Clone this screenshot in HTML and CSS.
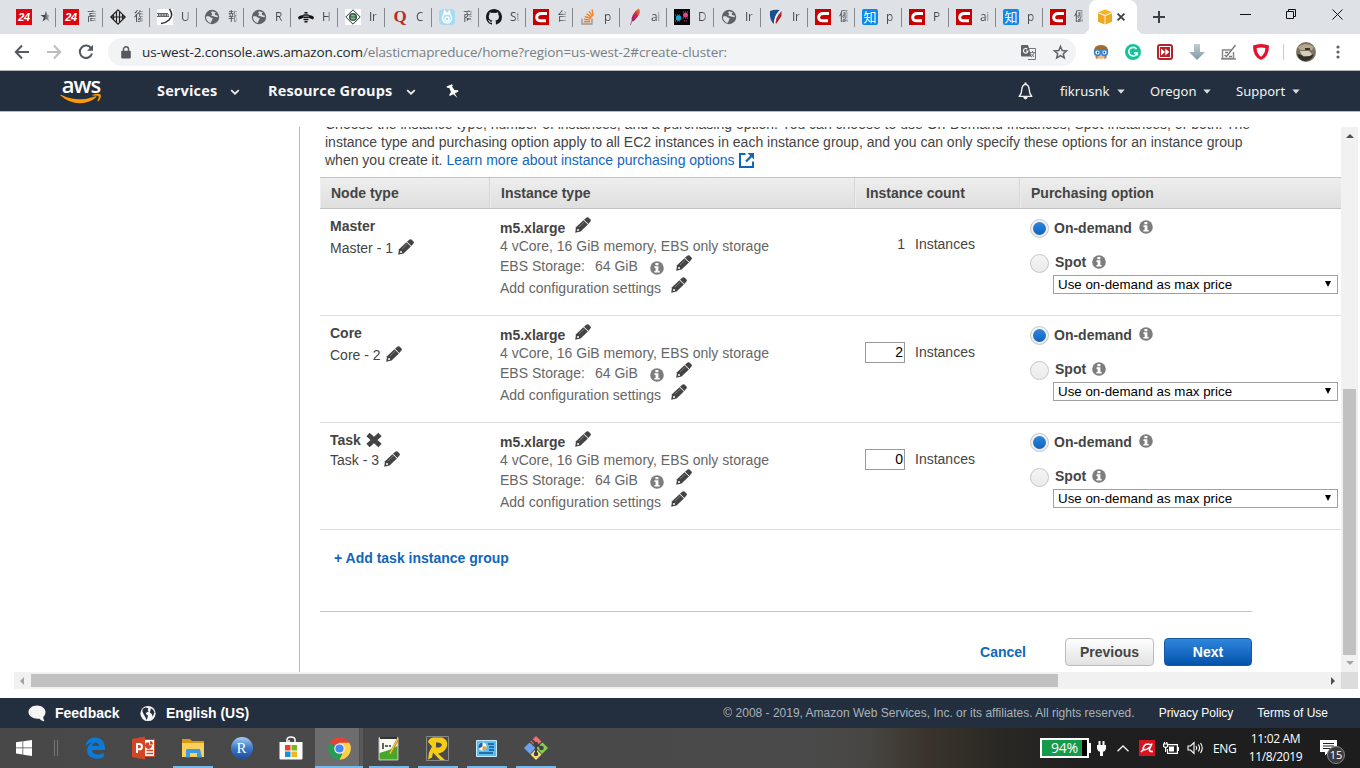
FILE: index.html
```html
<!DOCTYPE html>
<html lang="en">
<head>
<meta charset="utf-8">
<title>EMR - Create Cluster</title>
<link rel="stylesheet" href="styles.css">
</head>
<body>
<svg class="defs" width="0" height="0">
  <defs>
    <linearGradient id="gdown" x1="0" y1="0" x2="0" y2="1"><stop offset="0" stop-color="#c3cdd2"/><stop offset="1" stop-color="#7d99a6"/></linearGradient>
    <linearGradient id="gfeather" x1="1" y1="0" x2="0" y2="1"><stop offset="0" stop-color="#f79a23"/><stop offset=".4" stop-color="#cd2250"/><stop offset="1" stop-color="#6b2a7e"/></linearGradient>
  </defs>
  <symbol id="pencil" viewBox="0 0 16 16"><path fill="#444" d="M.2 15.700 1 10.300 8.400 3.300 12.900 7.600 5.600 14.600z"/><path fill="#444" d="M9 2.700 11.600.4Q12.500-.2 13.500.6L15.500 2.500Q16.300 3.400 15.600 4.300L13.400 7z"/><path stroke="#8a8a8a" stroke-width=".8" d="M4 10 9.300 5"/><circle cx="3" cy="13" r="1" fill="#fff"/></symbol>
  <symbol id="info" viewBox="0 0 14 14"><circle cx="7" cy="7" r="6.800" fill="#7d7d7d"/><path fill="#fff" d="M5.400 2h3v2.300h-3zM4.500 5.300h3.900v4.600h1.300v1.700H4.400V9.900h1.200V7H4.500z"/></symbol>
  <symbol id="globe" viewBox="0 0 16 16"><circle cx="8" cy="8" r="7.200" fill="#5f6368"/><path fill="#dee1e6" d="M2 7.500c2-.5 4-.3 4.500 1l2 .5c.5 1.500-1 2-1 3.500L6.500 14C3.500 13 1.800 10.500 2 7.500zM8 2.200l4 1.400-1.500 1.200.8 1.200 2.500.8v1.500l-3-.5L8.500 7 7 6.200 8.500 5 7 3.500z"/></symbol>
  <symbol id="csdn" viewBox="0 0 16 16"><path fill="#c90000" d="M0 0h16v16H0z"/><path fill="none" stroke="#fff" stroke-width="3" d="M14 4.500H9Q4.200 4.300 3.700 8 3.400 11.700 8 11.700h5"/></symbol>
  <symbol id="caret" viewBox="0 0 8 5"><path fill="#ddd" d="M.3.500h7.400L4 4.800z"/></symbol>
  <symbol id="chev" viewBox="0 0 10 7"><path fill="none" stroke="#eee" stroke-width="1.800" d="m1.200 1.200 3.800 3.500 3.800-3.500"/></symbol>
</svg>

<div class="tabstrip">
  <div class="tab"><span class="fav red24">24</span><span class="tt">★</span></div>
  <div class="tab"><span class="fav red24">24</span><span class="tt">高</span></div>
  <div class="tab"><svg class="fav" viewBox="0 0 16 16"><path fill="none" stroke="#222" stroke-width="1.200" d="M8 .8 15.200 8 8 15.200.8 8zM6.500 3v10M9.500 3v10M3.500 6v4M12.500 6v4M1 8h14"/></svg><span class="tt">復</span></div>
  <div class="tab"><svg class="fav" viewBox="0 0 16 16"><path fill="#fff" d="M0 0h16v16H0z"/><path fill="none" stroke="#666" d="M0 4.500h11M0 7.500h12"/><path stroke="#555" stroke-width="2" d="M1 6h11" stroke-dasharray="1 .6"/><path fill="none" stroke="#333" stroke-width="1.500" d="M12.500 0q4.500 6-.5 11-3 3-8 3.500"/></svg><span class="tt">U</span></div>
  <div class="tab"><svg class="fav"><use href="#globe"/></svg><span class="tt">報</span></div>
  <div class="tab"><svg class="fav"><use href="#globe"/></svg><span class="tt">R</span></div>
  <div class="tab"><svg class="fav" viewBox="0 0 16 16"><path fill="#111" d="M0 8.500Q1 6 6 6l-1 3-4 1.500zM16 8.500Q15 6 10 6l1 3 4 1.500z"/><path stroke="#111" stroke-width="1.500" d="M6.500 3.700h3M5.500 6h5M5.300 8.300h5.400M5.500 10.600h5M6.500 12.700h3"/></svg><span class="tt">H</span></div>
  <div class="tab"><svg class="fav" viewBox="0 0 16 16"><path fill="#fff" d="M0 0h16v16H0z"/><path fill="none" stroke="#333" d="M8 .8 15.200 8 8 15.200.8 8z"/><circle cx="8" cy="8" r="3.300" fill="#8fb69b" stroke="#295f3d" stroke-width="1.500"/><path stroke="#295f3d" d="M5 8h6"/></svg><span class="tt">Ir</span></div>
  <div class="tab"><span class="fav quora">Q</span><span class="tt">C</span></div>
  <div class="tab"><svg class="fav" viewBox="0 0 16 16"><rect width="16" height="16" rx="4" fill="#a5dcf3"/><g fill="none" stroke="#fff" stroke-width="1.500"><circle cx="8" cy="9.300" r="4.500"/><circle cx="8" cy="10" r="2"/><path d="M5 6 5.500 2 8 5l2.500-3L11 6"/></g></svg><span class="tt">商</span></div>
  <div class="tab"><svg class="fav" viewBox="0 0 16 16"><path fill="#15191d" d="M8 0C3.580 0 0 3.580 0 8c0 3.540 2.290 6.530 5.470 7.590.4.070.55-.17.55-.38v-1.490c-2.010.37-2.690-.49-2.850-1.080-.09-.23-.48-.94-.82-1.130-.28-.15-.68-.52-.01-.53.63-.01 1.080.58 1.230.82.72 1.210 1.870.87 2.330.66.070-.52.28-.87.510-1.070-1.780-.2-3.640-.89-3.640-3.950 0-.87.310-1.590.82-2.150-.08-.2-.36-1.020.08-2.120 0 0 .67-.21 2.200.82a7.600 7.600 0 0 1 4 0c1.530-1.040 2.200-.82 2.200-.82.44 1.100.16 1.920.08 2.120.51.56.82 1.270.82 2.150 0 3.070-1.870 3.750-3.650 3.950.29.25.54.73.54 1.480v2.200c0 .21.15.46.55.38A8 8 0 0 0 16 8c0-4.420-3.580-8-8-8"/></svg><span class="tt">St</span></div>
  <div class="tab"><svg class="fav"><use href="#csdn"/></svg><span class="tt">台</span></div>
  <div class="tab"><svg class="fav" viewBox="0 0 16 16"><path fill="none" stroke="#999" stroke-width="1.400" d="M2 9.500V15h10V9.500"/><path fill="none" stroke="#f48024" stroke-width="1.400" d="M3.800 12.800h6.400M4 10.300l6.300.8M4.800 7.500l6 2M6.500 4.700l5.200 3.700M9 2.300l3.700 5M12 .5l1.200 6"/></svg><span class="tt">p</span></div>
  <div class="tab"><svg class="fav" viewBox="0 0 16 16"><path fill="url(#gfeather)" d="M12 0q2 1 .5 4.500T7 12l-2 .5L3.800 16l-.6-.3 1.500-4Q4 8 7.500 3.500T12 0z"/></svg><span class="tt">ai</span></div>
  <div class="tab"><svg class="fav" viewBox="0 0 16 16"><path fill="#050505" d="M0 0h16v16H0z"/><circle cx="4.500" cy="9" r="2.700" fill="#14a5d8"/><circle cx="11.500" cy="6" r="2.500" fill="#e83e8c"/><path stroke="#14a5d8" stroke-dasharray="1 1" d="M1 6h5M1 12h6"/><path stroke="#e83e8c" stroke-dasharray="1 1" d="M9 3h6M9 9h6M10 12h4"/></svg><span class="tt">D</span></div>
  <div class="tab"><svg class="fav"><use href="#globe"/></svg><span class="tt">Ir</span></div>
  <div class="tab"><svg class="fav" viewBox="0 0 16 16"><path fill="#15508f" d="M2 2q5-2 10-1Q6 6 6 15 1 11 2 2z"/><path fill="#b3202c" d="M13.500 2v5L8 15q-1-2 .5-5.500T13.500 2z"/><path stroke="#fff" stroke-width="1" fill="none" d="M12.500 1Q7 6 6.500 14"/></svg><span class="tt">Ir</span></div>
  <div class="tab"><svg class="fav"><use href="#csdn"/></svg><span class="tt">優</span></div>
  <div class="tab"><span class="fav zhi">知</span><span class="tt">p</span></div>
  <div class="tab"><svg class="fav"><use href="#csdn"/></svg><span class="tt">P</span></div>
  <div class="tab"><svg class="fav"><use href="#csdn"/></svg><span class="tt">ai</span></div>
  <div class="tab"><span class="fav zhi">知</span><span class="tt">p</span></div>
  <div class="tab last"><svg class="fav"><use href="#csdn"/></svg><span class="tt">優</span></div>
  <div class="tab-active">
    <svg width="16" height="16" viewBox="0 0 16 16"><path fill="#f8b323" d="M8 .5 15 3.200 8 6 1 3.200z"/><path fill="#eda91f" d="M1 4.300 7.600 6.900v8.600L1 12.700zM15 4.300 8.400 6.900v8.600L15 12.700z"/></svg>
    <svg width="8" height="8" viewBox="0 0 8 8"><path stroke="#3c4043" stroke-width="1.800" d="m.6.6 6.800 6.800M7.400.6.600 7.400"/></svg>
  </div>
  <svg class="newtab" width="12" height="12" viewBox="0 0 12 12"><path stroke="#3c4043" stroke-width="2" d="M6 0v12M0 6h12"/></svg>
  <div class="winctl">
    <svg width="11" height="11" viewBox="0 0 11 11"><path stroke="#111" d="M0 5.500h11"/></svg>
    <svg width="11" height="11" viewBox="0 0 11 11"><path fill="none" stroke="#111" d="M.5 2.500h7v7h-7zM2.500 2.500v-2h7v7h-2"/></svg>
    <svg width="11" height="11" viewBox="0 0 11 11"><path stroke="#111" d="m.5.500 10 10M10.500.5l-10 10"/></svg>
  </div>
</div>

<div class="toolbar">
  <svg class="tb-back" width="16" height="16" viewBox="0 0 16 16"><path fill="none" stroke="#55595e" stroke-width="2" d="M15 8H2M8 1.500 1.800 8 8 14.500"/></svg>
  <svg class="tb-fwd" width="16" height="16" viewBox="0 0 16 16"><path fill="none" stroke="#babcbe" stroke-width="2" d="M1 8h13M8 1.500 14.200 8 8 14.500"/></svg>
  <svg class="tb-re" width="16" height="16" viewBox="0 0 16 16"><path fill="none" stroke="#55595e" stroke-width="2" d="M13.300 4.500A6.200 6.200 0 1 0 14 9.500"/><path fill="#55595e" d="M15 .800v6H9z"/></svg>
  <div class="omni">
    <svg class="lock" width="10" height="13" viewBox="0 0 10 13"><path fill="#55595e" d="M1 4.800h8q.8 0 .8.800v6q0 .8-.8.800H1q-.8 0-.8-.8v-6q0-.8.800-.8z"/><path fill="none" stroke="#55595e" stroke-width="1.400" d="M2.500 5V3.300a2.500 2.500 0 0 1 5 0V5"/></svg>
    <span class="url"><b>us-west-2.console.aws.amazon.com</b>/elasticmapreduce/home?region=us-west-2#create-cluster:</span>
    <svg class="trans" width="15" height="15" viewBox="0 0 15 15"><path fill="none" stroke="#777" d="M8 3.500h6.500v11H7"/><path fill="#5f6368" d="M1 0h6l3.500 11.500H1q-1 0-1-1V1q0-1 1-1z"/><path fill="none" stroke="#fff" stroke-width="1.200" d="M6.200 4A2.300 2.300 0 1 0 7 6H5"/><path fill="none" stroke="#777" d="M9 7.500h5M11.500 6v1.500M13 8q-1 3-3 4M10.500 9l2.500 3"/></svg>
    <svg class="star" width="15" height="14" viewBox="0 0 15 14"><path fill="none" stroke="#5f6368" stroke-width="1.500" d="m7.500 1.500 1.700 4 4.400.4-3.300 2.900 1 4.200-3.800-2.300L3.700 13l1-4.200L1.400 5.900l4.400-.4z"/></svg>
  </div>
  <div class="exts">
    <svg width="16" height="16" viewBox="0 0 16 16"><path fill="#a9692a" d="M1 9Q0 1 8 1t7 8z"/><path fill="#f3b98d" d="M3 6h10q1 9-5 9T3 6z"/><path fill="#c97a35" d="M2 13q1 2 3 2l-1-4zM14 13q-1 2-3 2l1-4z"/><circle cx="4.500" cy="8.500" r="2.900" fill="#fff" stroke="#2a86d8" stroke-width="1.600"/><circle cx="11.500" cy="8.500" r="2.900" fill="#fff" stroke="#2a86d8" stroke-width="1.600"/><circle cx="4.700" cy="8.500" r=".9" fill="#163f77"/><circle cx="11.300" cy="8.500" r=".9" fill="#163f77"/></svg>
    <svg width="16" height="16" viewBox="0 0 16 16"><circle cx="8" cy="8" r="8" fill="#15c39a"/><path fill="none" stroke="#fff" stroke-width="1.600" d="M11.500 5A4.300 4.300 0 1 0 12.200 9H9M12.200 8.300v3.200"/></svg>
    <svg width="16" height="16" viewBox="0 0 16 16"><rect x="1" y="1" width="14" height="14" rx="2" fill="#fff" stroke="#b5232a" stroke-width="2"/><path fill="#b5232a" d="M3 3h10v10H3z"/><path fill="#fff" d="M4 4.500 8 8l-4 3.500zM8.300 4.500l4 3.500-4 3.500z"/></svg>
    <svg width="16" height="16" viewBox="0 0 16 16"><path fill="url(#gdown)" d="M5 0h6v8h5l-8 8-8-8h5z"/></svg>
    <svg width="16" height="16" viewBox="0 0 16 16"><path fill="none" stroke="#888" stroke-width="1.500" d="M10 6H1.500v8.500h11V8M0 15h15"/><path fill="none" stroke="#777" stroke-width="1.300" d="m3.500 11 2 1.500L14.500 1M4 8.500h3M8 12.500h3"/></svg>
    <svg width="16" height="16" viewBox="0 0 16 16"><path fill="#e8112d" d="M8 0q4 0 8 1.500Q16 13 8 16 0 13 0 1.500 4 0 8 0z"/><path fill="#fff" d="M3.600 4q4.400-1.200 8.800 0Q12 10.500 8 12.700 4 10.500 3.600 4z"/></svg>
    <i class="sep"></i>
    <svg class="avatar" width="20" height="20" viewBox="0 0 20 20"><circle cx="10" cy="10" r="10" fill="#7c7362"/><path fill="#b7a88c" d="M2 5q8-6 16 0l-2 3H4z"/><path fill="#d8cdb8" d="M4 9h9l3 3-2 2H6z"/><path fill="#33312c" d="M1 12l5 1 2 2 6-1 4-2q-2 7-9 7-6 0-8-7zM9 6h5v2H9z"/></svg>
    <svg width="4" height="14" viewBox="0 0 4 14"><g fill="#5f6368"><circle cx="2" cy="2" r="1.600"/><circle cx="2" cy="7" r="1.600"/><circle cx="2" cy="12" r="1.600"/></g></svg>
  </div>
</div>

<div class="awsnav">
  <div class="awslogo"><span>aws</span><svg width="42" height="10" viewBox="0 0 42 10"><path fill="#f90" d="M.3 1.300Q.5.400 1.600 1 18 9 35.500 2.300q1.500-.3 1 .8Q30 9 20 9.300 9 9.300.3 1.300z"/><path fill="#f90" d="M32.500.9Q37-1.200 40.700.4q.8 3.600-2.400 6.800-1.100.3-.8-.7 1.700-3.200 1.200-4.600-1.500-.8-5.700-.2-1.100-.2-.5-.8z"/></svg></div>
  <span class="nb services">Services</span><svg class="ch1" width="10" height="7"><use href="#chev"/></svg>
  <span class="nb groups">Resource Groups</span><svg class="ch2" width="10" height="7"><use href="#chev"/></svg>
  <svg class="pin" width="13" height="14" viewBox="0 0 13 14"><path fill="#fff" d="M.5 2.500 6 .2l.8 1.200-.8 1.200L8.500 6l3.500.3.500 1.200-3.700 1.900L11.500 14 7.300 10.200 3.800 12l-.6-1.200L5 8 3.300 4 1 3.800z"/></svg>
  <div class="navright">
    <svg class="bell" width="15" height="18" viewBox="0 0 15 18"><path fill="none" stroke="#eee" stroke-width="1.400" stroke-linejoin="round" d="M7.500 2.300Q4 3 3.700 8.200q-.1 3.800-2.500 6.200h12.600q-2.400-2.400-2.500-6.200Q11 3 7.500 2.300z"/><path fill="#eee" d="M6.500.500h2v2h-2zM5.200 15h4.600q-.4 2.400-2.300 2.400T5.200 15z"/></svg>
    <span class="nr n1">fikrusnk</span><svg class="c1" width="8" height="5"><use href="#caret"/></svg>
    <span class="nr n2">Oregon</span><svg class="c1" width="8" height="5"><use href="#caret"/></svg>
    <span class="nr n3">Support</span><svg class="c1" width="8" height="5"><use href="#caret"/></svg>
  </div>
</div>

<div class="content">
  <div class="viewport">
    <div class="sidebar"></div>
    <div class="main">
      <div class="intro">
        <p class="l1">Choose the instance type, number of instances, and a purchasing option. You can choose to use On-Demand Instances, Spot Instances, or both. The</p>
        <p class="l2">instance type and purchasing option apply to all EC2 instances in each instance group, and you can only specify these options for an instance group</p>
        <p class="l3">when you create it. <a>Learn more about instance purchasing options</a><svg class="ext" width="15" height="15" viewBox="0 0 15 15"><path fill="none" stroke="#1166bb" stroke-width="2" d="M6.500 1H1v13h13V8.500"/><path fill="#1166bb" d="M8.500 0H15v6.500l-2.200-2.200-5 5-1.600-1.600 5-5z"/></svg></p>
      </div>
      <div class="grid thead"><div>Node type</div><div>Instance type</div><div>Instance count</div><div>Purchasing option</div></div>

      <div class="grid row">
        <div class="node"><div class="ln"><b>Master</b></div><div class="ln"><span>Master - 1</span><svg class="pc"><use href="#pencil"/></svg></div></div>
        <div class="inst"><div class="ln s"><b>m5.xlarge</b><svg class="pc"><use href="#pencil"/></svg></div><div class="ln s">4 vCore, 16 GiB memory, EBS only storage</div><div class="ln"><span class="ebs">EBS Storage:</span><span class="gib">64 GiB</span><svg class="inf low"><use href="#info"/></svg><svg class="pc"><use href="#pencil"/></svg></div><div class="ln"><span class="cfg">Add configuration settings</span><svg class="pc"><use href="#pencil"/></svg></div></div>
        <div class="count plain"><span class="num">1</span><span>Instances</span></div>
        <div class="buy"><div class="opt"><i class="radio on"></i><b class="od">On-demand</b><svg class="inf"><use href="#info"/></svg></div><div class="opt spot"><i class="radio"></i><b class="sp">Spot</b><svg class="inf"><use href="#info"/></svg></div><div class="sel"><span>Use on-demand as max price</span><i></i></div></div>
      </div>

      <div class="grid row">
        <div class="node"><div class="ln"><b>Core</b></div><div class="ln"><span>Core - 2</span><svg class="pc"><use href="#pencil"/></svg></div></div>
        <div class="inst"><div class="ln s"><b>m5.xlarge</b><svg class="pc"><use href="#pencil"/></svg></div><div class="ln s">4 vCore, 16 GiB memory, EBS only storage</div><div class="ln"><span class="ebs">EBS Storage:</span><span class="gib">64 GiB</span><svg class="inf low"><use href="#info"/></svg><svg class="pc"><use href="#pencil"/></svg></div><div class="ln"><span class="cfg">Add configuration settings</span><svg class="pc"><use href="#pencil"/></svg></div></div>
        <div class="count"><span class="field">2</span><span class="unit">Instances</span></div>
        <div class="buy"><div class="opt"><i class="radio on"></i><b class="od">On-demand</b><svg class="inf"><use href="#info"/></svg></div><div class="opt spot"><i class="radio"></i><b class="sp">Spot</b><svg class="inf"><use href="#info"/></svg></div><div class="sel"><span>Use on-demand as max price</span><i></i></div></div>
      </div>

      <div class="grid row">
        <div class="node task"><div class="ln"><b>Task</b><svg class="xx" width="16" height="16" viewBox="0 0 16 16"><path stroke="#444" stroke-width="4.800" d="m2 2.500 12 11M14 2.500 2 13.500"/></svg></div><div class="ln t2"><span>Task - 3</span><svg class="pc"><use href="#pencil"/></svg></div></div>
        <div class="inst"><div class="ln s"><b>m5.xlarge</b><svg class="pc"><use href="#pencil"/></svg></div><div class="ln s">4 vCore, 16 GiB memory, EBS only storage</div><div class="ln"><span class="ebs">EBS Storage:</span><span class="gib">64 GiB</span><svg class="inf low"><use href="#info"/></svg><svg class="pc"><use href="#pencil"/></svg></div><div class="ln"><span class="cfg">Add configuration settings</span><svg class="pc"><use href="#pencil"/></svg></div></div>
        <div class="count"><span class="field">0</span><span class="unit">Instances</span></div>
        <div class="buy"><div class="opt"><i class="radio on"></i><b class="od">On-demand</b><svg class="inf"><use href="#info"/></svg></div><div class="opt spot"><i class="radio"></i><b class="sp">Spot</b><svg class="inf"><use href="#info"/></svg></div><div class="sel"><span>Use on-demand as max price</span><i></i></div></div>
      </div>

      <div class="addgroup">+ Add task instance group</div>
      <div class="actions"><span class="cancel">Cancel</span><span class="btn prev">Previous</span><span class="btn next">Next</span></div>
    </div>
  </div>
  <div class="vbar"><i class="up"></i><div class="vthumb"></div><i class="down"></i></div>
  <div class="hbar"><i class="left"></i><div class="hthumb"></div><i class="right"></i></div>
  <div class="corner"></div>
</div>

<div class="footer">
  <svg class="bubble" width="18" height="17" viewBox="0 0 18 17"><path fill="#f5f5f5" d="M9 .5c4.800 0 8.500 2.900 8.500 6.600 0 2.300-1 3.900-2.300 5 .1 1.800.6 3 1.300 4.200-2.200-.3-3.800-1.300-5-2.600-6.200.7-11-2.400-11-6.600C.500 3.400 4.200.500 9 .500z"/></svg>
  <b class="fb">Feedback</b>
  <svg class="fglobe" width="16" height="17" viewBox="0 0 17 17"><circle cx="8.500" cy="8.500" r="8.100" fill="#f5f5f5"/><path fill="#232f3e" d="M3 3.500 6 2l3 1-1 2 1.500 1L7 7.500 6 9l2.500 1.500L8 13l-1 2.500L5.500 12 4 9.500 2.500 6zM11.500 3l2.500 1.500 1.300 3L13.500 12l-1-3-2-1.500.5-2z"/></svg>
  <b class="lang">English (US)</b>
  <div class="fright"><span class="copy">© 2008 - 2019, Amazon Web Services, Inc. or its affiliates. All rights reserved.</span><span class="pp">Privacy Policy</span><span class="tou">Terms of Use</span></div>
</div>

<div class="taskbar">
  <div class="ti start"><svg width="16" height="16" viewBox="0 0 16 16"><path fill="#fff" d="M0 2.200 6.500 1.300v6.200H0zM7.200 1.200 16 0v7.500H7.200zM0 8.300h6.500v6.200L0 13.600zM7.200 8.300H16V16l-8.800-1.300z"/></svg></div>
  <div class="grip"></div>
  <div class="ti"><svg width="22" height="22" viewBox="0 0 22 22"><path fill="#0a7bd8" d="M1 9.700Q3 .5 11.300.5 20.500.5 21 11v2H8q.3 4.500 5.800 4.600 3 0 6-1.700v4.200q-3 1.700-7.300 1.600Q3.300 21.300 3 13.200 3.400 8.200 8.500 5.800 3.800 6 1 9.700zM8.200 9h6.900q-.3-3.500-3.300-3.500T8.200 9z"/></svg></div>
  <div class="ti"><svg width="23" height="24" viewBox="0 0 23 24"><path fill="#fff" stroke="#d24625" d="M12.500 3.500h10v17h-10z"/><path fill="#d24625" d="M0 3 13 .5v23L0 21z"/><path fill="none" stroke="#d24625" stroke-width="1.500" d="M14.500 14.500h6.500M14.500 17.500h6.500"/><path fill="#d24625" d="M14.500 6.500h2.700v2.700H20a3.500 3.500 0 1 1-5.500-2.700zM18 5v3.400h3Q21 5 18 5z"/><path fill="none" stroke="#fff" stroke-width="2" d="M5 17V8h2.300a2.500 2.500 0 0 1 0 5.300H5"/></svg></div>
  <div class="ti run"><svg width="22" height="20" viewBox="0 0 22 20"><path fill="#d89a12" d="M0 1h8l2 2h12v4H0z"/><path fill="#fbd15b" d="M0 5h22v14H0z"/><path fill="#3f9be0" d="M5 11h13l2 8.500h-5V15H8v4.500H4V12z"/></svg></div>
  <div class="ti"><div class="rstudio">R</div></div>
  <div class="ti"><svg width="24" height="24" viewBox="0 0 24 24"><path fill="none" stroke="#fff" stroke-width="1.500" d="M8 6V4q0-3 4-3t4 3v2M10 6V4"/><path fill="#fff" d="M.500 6h23v16.500q0 1-1 1h-21q-1 0-1-1z"/><path fill="#e8431f" d="M6 9h5.500v5.500H6z"/><path fill="#79b81c" d="M12.500 9H18v5.500h-5.500z"/><path fill="#1295d8" d="M6 15.500h5.500V21H6z"/><path fill="#f5b51d" d="M12.500 15.500H18V21h-5.500z"/></svg></div>
  <div class="ti run active"><svg width="23" height="23" viewBox="0 0 24 24"><path fill="#e04437" d="M12 12 1.800 6A11.800 11.800 0 0 1 22.200 6z"/><path fill="#fdd048" d="M12 12V6h10.200A11.800 11.800 0 0 1 12 23.800z"/><path fill="#269c55" d="M1.800 6 12 12l3 6-3.200 5.800A11.800 11.800 0 0 1 1.800 6z"/><circle cx="12" cy="12" r="5.500" fill="#f5f5f5"/><circle cx="12" cy="12" r="4.300" fill="#4688f1"/></svg></div>
  <div class="ti run"><svg width="22" height="26" viewBox="0 0 22 26"><path fill="#f7faef" stroke="#bbb" d="M1 2.500h19v22.500H1z"/><path fill="#45a82b" d="M1.500 18q9-2 18-7v13.500h-18z"/><path fill="#333" d="M2 2h17v2H2z"/><path stroke="#333" stroke-width="1.500" d="M5 8v6M7 11h3M11 11h2"/><path stroke="#c58518" stroke-width="2.600" d="M20 4 12 19"/><path stroke="#f8dc4b" stroke-width="1" d="M19.700 4 12 18.500"/></svg></div>
  <div class="ti run"><svg width="23" height="25" viewBox="0 0 23 25"><path fill="#4b4a49" stroke="#888" d="M.500.500h22v24H.500z"/><path fill="#f5cc17" d="M7 1.500h9q6 2 5 8t-7 7.500l-2 .5 7 6.500h-5l-7-7.500-1 5-4 2 1-7 3-6L2 6q1-4 5-4.500zM10 6.500v5q5 .5 6-2.500-.5-3-6-2.500z"/></svg></div>
  <div class="ti run"><svg width="21" height="17" viewBox="0 0 21 17"><path fill="#5abdf0" stroke="#c6ebff" d="M.500.500h20v16H.500z"/><circle cx="6.500" cy="6.500" r="4" fill="#fff"/><path fill="#1d63aa" d="M6.500 2.500v4l-3.500 2a4 4 0 0 1 3.500-6z"/><path fill="#f59c28" d="M6.500 6.500h4a4 4 0 0 1-4 4z"/><path stroke="#17548f" stroke-width="1.500" d="M12 4h6M13 7h5M13 10h5M3 13h14"/></svg></div>
  <div class="ti run"><svg width="24" height="24" viewBox="0 0 24 24"><path fill="#ef6f73" d="m12 0 5.500 5.500-5.500 5-5.500-5z"/><path fill="#6fa0f2" d="m5.500 6.500 6 5.500-5.500 6L0 12z"/><path fill="#88cf4b" d="m18.500 6.500 5.500 5.500-6 6-5.500-6z"/><path fill="#f8df80" d="m12 13 5.500 5.500L12 24l-5.500-5.500z"/><path fill="none" stroke="#41423d" stroke-width="2" d="M8 4 12 8v11M12 8l6 4"/><circle cx="12" cy="8" r="2.300" fill="#41423d"/><circle cx="17.500" cy="12" r="2.300" fill="#41423d"/><circle cx="12" cy="18" r="2.300" fill="#41423d"/></svg></div>
  <div class="tray">
    <div class="batt">94%</div><i class="nub"></i>
    <svg class="plug" width="9" height="15" viewBox="0 0 9 15"><path fill="#fff" d="M1.500 0h2v4h2V0h2v4H9v3.500Q8.500 10.300 6 10.800V15H3v-4.200Q.5 10.300 0 7.500V4h1.500z"/></svg>
    <svg class="tup" width="12" height="7" viewBox="0 0 12 7"><path fill="none" stroke="#eee" stroke-width="1.400" d="M.500 6.300 6 1l5.500 5.300"/></svg>
    <svg class="avira" width="16" height="16" viewBox="0 0 16 16"><path fill="#d91422" d="M0 0h16v16H0z"/><path fill="none" stroke="#fff" stroke-width="1.600" d="M13 3.500 10.500 9q-1 2.800 3.500 2.500M12.500 5.500Q10 3 6.500 4.500 3.500 7 4.500 9.500 7 10.500 11 7M4.500 9.500l-2.500 2.500"/></svg>
    <svg class="pwr" width="16" height="14" viewBox="0 0 16 14"><path fill="none" stroke="#fff" stroke-width="1.200" d="M5 3.600h9.400v8.800H4.500V8M.6 3h4v2.500q-2 1.500-4 0zM1.500 1v2M3.800 1v2M2.600 6.500V11"/><path fill="#fff" d="M6 5.500h5v5H6zM14.500 6H16v4h-1.500z"/></svg>
    <svg class="vol" width="17" height="14" viewBox="0 0 17 14"><path fill="none" stroke="#fff" stroke-width="1.100" d="M1 5h2.500L7 1.500v11L3.500 9H1zM9 5q1.500 2 0 4M11.300 3.500q2.500 3.500 0 7M13.500 2q3.500 5 0 10"/></svg>
    <span class="eng">ENG</span>
    <div class="clock"><span>11:02 AM</span><span>11/8/2019</span></div>
    <div class="note"><svg width="17" height="16" viewBox="0 0 17 16"><path fill="#fff" d="M0 0h17v12H8.500L5 15.500V12H0z"/><path stroke="#222" stroke-width="1.200" d="M3 3.500h11M3 6h11M3 8.500h8"/></svg><span class="badge">15</span></div>
  </div>
</div>
</body>
</html>
```
FILE: styles.css
```css
* { box-sizing: border-box; }
body { margin: 0; width: 1360px; height: 768px; overflow: hidden; background: #fff; display: flex; flex-direction: column; font-family: "Liberation Sans", Arial, sans-serif; font-size: 14px; color: #444; }
.defs { position: absolute; }
svg { flex: none; display: block; overflow: visible; }
span, b, p { white-space: nowrap; }

/* browser tabs */
.tabstrip { flex: none; height: 34px; background: #dee1e6; display: flex; padding-left: 8px; }
.tab { flex: none; width: 47px; height: 34px; padding: 9px 0 0 8px; display: flex; gap: 8px; position: relative; }
.tab::after { content: ""; position: absolute; right: -1px; top: 8px; width: 1px; height: 19px; background: #85888d; }
.tab.last::after { display: none; }
.fav { flex: none; width: 16px; height: 16px; }
.tt { width: 9px; height: 17px; overflow: hidden; font: 12px/16px "Open Sans", "Noto Sans CJK TC", sans-serif; letter-spacing: -.3px; color: #45494e; -webkit-mask-image: linear-gradient(90deg, #000 50%, rgba(0,0,0,.3)); mask-image: linear-gradient(90deg, #000 50%, rgba(0,0,0,.3)); }
.red24 { background: #dc0510; color: #fff; font: italic bold 11px/16px "Liberation Sans", sans-serif; text-align: center; letter-spacing: -.3px; }
.quora { color: #b92b27; font: bold 17px/16px "Liberation Serif", serif; text-align: center; }
.zhi { background: #0f88eb; color: #fff; border-radius: 2px; font: 13px/15px "Noto Sans CJK SC", sans-serif; text-align: center; }
.tab-active { flex: none; width: 48px; height: 34px; background: #fff; border-radius: 8px 8px 0 0; display: flex; align-items: center; gap: 4px; padding-left: 8px; position: relative; }
.tab-active::before, .tab-active::after { content: ""; position: absolute; bottom: 0; width: 7px; height: 7px; }
.tab-active::before { left: -7px; background: radial-gradient(circle at 0 0, #dee1e6 7px, #fff 7px); }
.tab-active::after { right: -7px; background: radial-gradient(circle at 100% 0, #dee1e6 7px, #fff 7px); }
.newtab { margin: 11px 0 0 16px; }
.winctl { margin-left: auto; display: flex; gap: 35px; padding: 9px 17px 0 0; }

/* address bar */
.toolbar { flex: none; height: 37px; background: #fff; border-bottom: 1px solid #b4b6b8; display: flex; align-items: center; padding-left: 14px; }
.tb-fwd, .tb-re { margin-left: 16px; }
.omni { flex: none; margin-left: 14px; width: 968px; height: 28px; background: #f1f3f4; border-radius: 14px; display: flex; align-items: center; padding: 0 8px 0 13px; }
.url { margin-left: 11px; font: 13.500px/20px "Open Sans", sans-serif; letter-spacing: -.12px; color: #7b7f84; }
.url b { font-weight: 400; color: #26282b; }
.trans { margin-left: auto; }
.star { margin-left: 17px; }
.exts { display: flex; align-items: center; margin-left: 17px; gap: 16px; }
.sep { width: 1px; height: 16px; background: #ccc; margin-left: -2px; }
.avatar { margin-left: -4px; }
.exts .avatar + svg { margin-left: 4px; }

/* console header */
.awsnav { flex: none; height: 41px; background: #232f3e; border-bottom: 1px solid #b9bdc2; display: flex; align-items: center; color: #f2f2f2; }
.awslogo { margin-left: 60px; width: 42px; height: 28px; display: flex; flex-direction: column; align-items: center; }
.awslogo span { font: 600 22px/14px "Open Sans", sans-serif; letter-spacing: -.9px; color: #fff; height: 17px; }
.nb { font: 700 14.500px/20px "Open Sans", sans-serif; letter-spacing: .15px; color: #f6f6f6; }
.services { margin-left: 55px; width: 73px; }
.groups { margin-left: 28px; width: 138px; }
.ch1, .ch2 { margin-top: 2px; }
.pin { margin-left: 30px; }
.navright { margin-left: auto; display: flex; align-items: center; padding-right: 60px; }
.nr { font: 13px/20px "Noto Sans", sans-serif; }
.bell { margin-right: 27px; }
.n1 { width: 57px; } .n2 { width: 53px; margin-left: 25px; } .n3 { width: 56px; margin-left: 25px; }

/* scrolling pane */
.content { flex: none; height: 586px; padding: 15px 2px 0 14px; display: grid; grid-template-columns: 1327px 17px; grid-template-rows: 545px 17px; }
.viewport { display: flex; overflow: hidden; }
.sidebar { flex: none; width: 286px; border-right: 1px solid #bbb; }
.main { flex: none; width: 1021px; margin-left: 20px; }
.intro { height: 50px; padding-left: 5px; overflow: hidden; }
.intro p { margin: 0; height: 18px; line-height: 18px; display: flex; align-items: center; }
.intro .l1 { margin-top: -12px; }
.intro a { color: #1166bb; margin-left: 4px; }
.ext { margin-left: 5px; }
.grid { display: grid; grid-template-columns: 170px 365px 165px 321px; }
.thead { height: 32px; border-top: 1px solid #c3c3c3; border-bottom: 1px solid #c3c3c3; background: linear-gradient(#eee, #dfdfdf); font-weight: 700; line-height: 30px; }
.thead div { padding-left: 11px; border-right: 1px solid #d6d6d6; box-shadow: inset 1px 0 #eee; }
.thead div:last-child { border-right: 0; }
.row { height: 107px; border-bottom: 1px solid #ddd; }
.ln { display: flex; align-items: center; height: 22px; }
.ln.s { height: 18px; }
.pc { width: 16px; height: 16px; margin-bottom: 6px; }
.inf { width: 14px; height: 14px; }
.node { padding: 6px 0 0 10px; }
.node .pc { margin: 0 0 2px 5px; }
.node .t2 { height: 17px; }
.xx { margin-left: 5px; }
.inst { padding: 10px 0 0 10px; color: #666; }
.inst b { color: #444; width: 75px; }
.ebs { width: 95px; }
.gib { width: 55px; }
.low { margin: 3px 12px 0 0; }
.cfg { width: 171px; }
.count { padding: 26px 0 0 10px; display: flex; align-items: center; height: 47px; gap: 10px; }
.count.plain { height: 44px; }
.num { width: 40px; text-align: right; }
.unit { margin-top: -2px; }
.field { width: 40px; height: 21px; border: 1px solid #999; background: #fff; color: #000; line-height: 19px; text-align: right; padding-right: 1px; }
.buy { padding-top: 9px; }
.opt { display: flex; align-items: center; height: 20px; padding-left: 10px; }
.radio { width: 19px; height: 19px; border-radius: 50%; border: 1px solid #c6c6c6; background: linear-gradient(#f4f4f4, #ebebeb); display: grid; place-items: center; }
.radio.on::after { content: ""; width: 13px; height: 13px; border-radius: 50%; background: linear-gradient(#2e86dd, #1064ba); }
.od { margin-left: 5px; width: 85px; }
.sp { margin-left: 6px; width: 37px; margin-top: -2px; }
.opt .inf { margin-top: -2px; }
.opt.spot { margin-top: 15px; }
.sel { margin: 2px 0 0 33px; width: 285px; height: 19px; border: 1px solid #a0a0a0; display: flex; align-items: center; justify-content: space-between; padding: 0 6px 0 4px; font-size: 13.330px; color: #000; line-height: 17px; }
.sel i { border: 3.500px solid transparent; border-top: 6px solid #000; border-bottom: 0; margin-top: -2px; }
.addgroup { height: 82px; border-bottom: 1px solid #c3c3c3; width: 932px; padding: 19px 0 0 14px; line-height: 18px; font-weight: 700; color: #1166bb; }
.actions { width: 932px; display: flex; justify-content: flex-end; align-items: center; padding-top: 26px; font-weight: 700; }
.cancel { color: #1166bb; margin-right: 39px; }
.btn { height: 28px; border-radius: 4px; line-height: 26px; text-align: center; border: 1px solid #bcbcbc; }
.prev { width: 89px; background: linear-gradient(#fefefe, #e2e2e2); margin-right: 10px; }
.next { width: 88px; color: #fff; border-color: #1259a5; background: linear-gradient(#2f86dd, #0453ab); }
.vbar { background: #f1f1f1; display: flex; flex-direction: column; align-items: center; }
.vthumb { width: 13px; height: 266px; background: #c1c1c1; margin-top: 251px; }
.up { border: 4px solid transparent; border-bottom-color: #505050; border-top: 0; margin-top: 7px; }
.down { border: 4px solid transparent; border-top-color: #a3a3a3; border-bottom: 0; margin-top: 6px; }
.hbar { background: #f1f1f1; display: flex; align-items: center; }
.left { border: 4px solid transparent; border-right-color: #a3a3a3; border-left: 0; margin-left: 6px; }
.hthumb { width: 1027px; height: 13px; background: #c1c1c1; margin-left: 7px; }
.right { border: 4px solid transparent; border-left-color: #505050; border-right: 0; margin-left: auto; margin-right: 6px; }
.corner { background: #dcdcdc; }

/* console footer */
.footer { flex: none; height: 30px; background: #232f3e; display: flex; align-items: center; color: #fff; padding-left: 28px; }
.fb { margin-left: 9px; width: 85px; }
.lang { margin-left: 10px; }
.fright { margin-left: auto; display: flex; font-size: 12px; padding-right: 32px; }
.copy { color: #a9b3bb; }
.pp { margin-left: 24px; }
.tou { margin-left: 24px; }

/* taskbar */
.taskbar { flex: none; height: 40px; display: flex; background: linear-gradient(90deg, #484848 0, #4a4a4a 60%, #464542 64%, #3b342d 68%, #282723 74%, #1f1f20 80%, #1d1d1d 100%); color: #fff; font-family: "Open Sans", sans-serif; }
.ti { flex: none; width: 49px; height: 40px; display: flex; align-items: center; justify-content: center; position: relative; }
.ti.start { width: 48px; }
.grip { flex: none; width: 4px; height: 16px; margin: 12px 12px 0 6px; border: 1px solid #777; border-width: 0 1px; }
.run::after { content: ""; position: absolute; left: 5px; right: 4px; bottom: 0; height: 2px; background: #76b9ed; }
.run.active { background: linear-gradient(90deg, #6d6d6d 0 44px, #4f4f4f 44px 45px, #5a5a5a 45px); width: 48px; margin-right: 1px; }
.run.active::after { left: 0; right: 0; }
.rstudio { width: 22px; height: 22px; border-radius: 50%; background: linear-gradient(#a4cff5, #3c7ac9 50%, #1c4f9f); font: 15px/22px "Liberation Serif", serif; text-align: center; color: #fff; }
.tray { margin-left: auto; display: flex; align-items: center; }
.batt { width: 49px; height: 20px; border: 2px solid #fff; background: linear-gradient(90deg, #159a4c 40px, #000 40px); font-size: 14px; line-height: 16px; text-align: center; letter-spacing: -.2px; }
.nub { width: 2px; height: 10px; background: #fff; }
.plug { margin-left: 6px; }
.tup { margin-left: 11px; }
.avira { margin-left: 10px; }
.pwr { margin-left: 8px; }
.vol { margin-left: 8px; }
.eng { margin-left: 9px; font-size: 12px; width: 25px; letter-spacing: -.3px; }
.clock { margin-left: 9px; width: 57px; font-size: 12px; line-height: 18px; letter-spacing: -.35px; display: flex; flex-direction: column; align-items: center; }
.note { margin: 0 17px 0 16px; position: relative; width: 23px; }
.badge { position: absolute; left: 7px; top: 6px; width: 18px; height: 18px; border-radius: 50%; background: #3b3b3b; border: 1px solid #888; font-size: 11px; line-height: 15px; text-align: center; }
```
